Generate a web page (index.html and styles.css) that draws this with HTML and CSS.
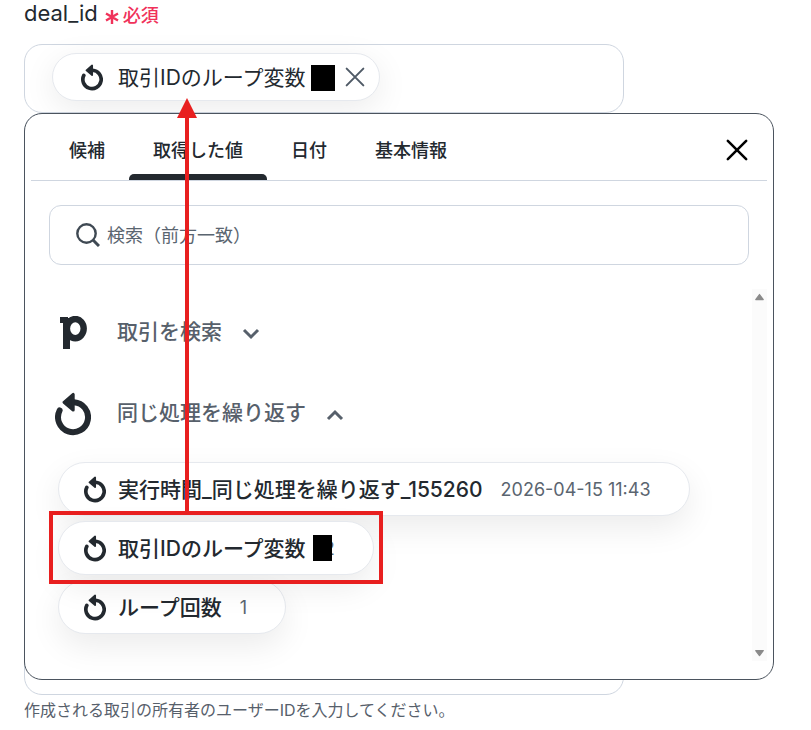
FILE: index.html
```
<!DOCTYPE html>
<html lang="ja">

<head>
  <meta charset="UTF-8">
  <meta name="viewport" content="width=device-width, initial-scale=1.0">
  <title>deal_id</title>
  <link rel="stylesheet" href="styles.css">
</head>

<body>
  <!-- shared icons -->
  <svg class="sprite" aria-hidden="true">
    <symbol id="icon-loop" viewBox="0 0 36 44">
      <path d="M4.6 18.5A15 15 0 1 0 19 10.2" fill="none" stroke="currentColor" stroke-width="6" stroke-linecap="round" />
      <path d="M9 10.3 18.2 2.4V18Z" fill="currentColor" stroke="currentColor" stroke-width="3" stroke-linejoin="round" />
    </symbol>
    <symbol id="icon-close" viewBox="0 0 24 24">
      <path d="M2 2 22 22M22 2 2 22" fill="none" stroke="currentColor" stroke-linecap="round" />
    </symbol>
    <symbol id="icon-chevron" viewBox="0 0 18 12">
      <path d="M2 2 9 9 16 2" fill="none" stroke="currentColor" stroke-width="3" />
    </symbol>
  </svg>

  <main class="field">
    <div class="field-label">
      <span>deal_id</span>
      <svg class="icon-required" viewBox="0 0 14 16" aria-hidden="true">
        <path d="M7 1V15M1 4.5 13 11.5M13 4.5 1 11.5" fill="none" stroke="currentColor" stroke-width="2.4" />
      </svg>
      <span class="required">必須</span>
    </div>

    <div class="field-box">
      <div class="chip">
        <svg class="icon-loop"><use href="#icon-loop" /></svg>
        <span class="text">取引IDのループ変数</span>
        <span class="chip-mask"></span>
        <button class="chip-remove" type="button" aria-label="削除">
          <svg><use href="#icon-close" /></svg>
        </button>
      </div>
    </div>

    <div class="picker-area">
      <div class="field-back"></div>
      <section class="picker">
        <header class="picker-header">
          <nav class="tabs">
            <button class="tab" type="button">候補</button>
            <button class="tab active" type="button">取得した値</button>
            <button class="tab" type="button">日付</button>
            <button class="tab" type="button">基本情報</button>
          </nav>
          <button class="picker-close" type="button" aria-label="閉じる">
            <svg><use href="#icon-close" /></svg>
          </button>
        </header>

        <label class="search">
          <svg viewBox="0 0 24 24" aria-hidden="true">
            <circle cx="10.5" cy="10.5" r="9.2" fill="none" stroke="currentColor" stroke-width="2.4" />
            <path d="M17 17 23 23" stroke="currentColor" stroke-width="3" />
          </svg>
          <input type="text" placeholder="検索（前方一致）" aria-label="検索（前方一致）">
        </label>

        <div class="picker-body">
          <div class="list">
            <button class="group" type="button">
              <span class="group-icon">
                <svg class="logo-p" viewBox="0 0 27 33">
                  <rect x="0" y="1" width="8" height="6" />
                  <rect x="3" y="2" width="7" height="31" />
                  <ellipse cx="15.3" cy="12.6" rx="8.4" ry="9.6" fill="none" stroke="currentColor" stroke-width="6.4" />
                </svg>
              </span>
              <span class="text">取引を検索</span>
              <svg class="chevron"><use href="#icon-chevron" /></svg>
            </button>
            <button class="group" type="button">
              <span class="group-icon">
                <svg class="logo-loop"><use href="#icon-loop" /></svg>
              </span>
              <span class="text">同じ処理を繰り返す</span>
              <svg class="chevron open"><use href="#icon-chevron" /></svg>
            </button>

            <ul class="values">
              <li>
                <button class="value" type="button">
                  <svg class="icon-loop"><use href="#icon-loop" /></svg>
                  <span class="text">実行時間_同じ処理を繰り返す_155260</span>
                  <span class="value-sample">2026-04-15 11:43</span>
                </button>
              </li>
              <li class="marked">
                <button class="value" type="button">
                  <svg class="icon-loop"><use href="#icon-loop" /></svg>
                  <span class="text">取引IDのループ変数</span>
                  <span class="value-sample masked">2</span>
                </button>
                <div class="marker">
                  <div class="marker-arrow"></div>
                </div>
              </li>
              <li>
                <button class="value" type="button">
                  <svg class="icon-loop"><use href="#icon-loop" /></svg>
                  <span class="text">ループ回数</span>
                  <span class="value-sample">1</span>
                </button>
              </li>
            </ul>
          </div>
          <div class="scrollbar" aria-hidden="true">
            <svg viewBox="0 0 10 8"><path d="M5 2 8 6H2Z" /></svg>
            <svg viewBox="0 0 10 8"><path d="M5 6 8 2H2Z" /></svg>
          </div>
        </div>
      </section>
    </div>

    <p class="help">作成される取引の所有者のユーザーIDを入力してください。</p>
  </main>
</body>

</html>
```
FILE: styles.css
```
* {
  box-sizing: border-box;
}

body {
  margin: 0;
  background: #fff;
  color: #23292f;
  font-family: Inter, "Noto Sans CJK JP", sans-serif;
}

button {
  margin: 0;
  padding: 0;
  border: none;
  background: none;
  color: inherit;
  font: inherit;
  cursor: pointer;
}

svg {
  display: block;
  flex: none;
}

.sprite {
  position: absolute;
  width: 0;
  height: 0;
}

.field {
  margin: 0 37px 0 24px;
}

/* label */
.field-label {
  display: flex;
  align-items: center;
  height: 44px;
  padding-bottom: 18px;
  font-size: 22px;
}

.icon-required {
  width: 14px;
  height: 16px;
  margin: 8px 4px 0 7px;
  color: #f0325a;
}

.required {
  padding-top: 2px;
  color: #f0325a;
  font-size: 18px;
  font-weight: 500;
}

/* input box */
.field-box,
.field-back {
  width: 80%;
  border: 1px solid #cfd6e0;
  border-radius: 18px;
}

.field-box {
  padding: 8px 27px 11px;
}

.chip {
  display: inline-flex;
  align-items: center;
  height: 48px;
  padding: 0 14px 0 28px;
  border: 1px solid #e6e9ee;
  border-radius: 24px;
  background: #fff;
  box-shadow: 0 8px 32px rgba(0, 0, 0, 0.08);
  font-size: 21px;
  vertical-align: top;
  white-space: nowrap;
}

.text {
  padding-bottom: 2px;
}

.icon-loop {
  width: 22px;
  height: 27px;
  margin-right: 15px;
}

.chip-mask {
  width: 24px;
  height: 26px;
  margin: 2px 10px 0 5px;
  background: #000;
}

.chip-remove {
  color: #4f5a66;
}

.chip-remove svg {
  width: 20px;
  height: 20px;
  stroke-width: 2.4;
}

/* picker */
.picker-area {
  display: grid;
}

.picker-area > * {
  grid-area: 1 / 1;
}

.picker {
  margin-bottom: 15px;
  padding: 0 6px 18px;
  border: 1px solid #4b545e;
  border-radius: 18px;
  background: #fff;
  z-index: 1;
}

.picker-header {
  display: flex;
  align-items: center;
  justify-content: space-between;
  height: 67px;
  padding: 0 19px 0 14px;
  border-bottom: 1px solid #cfd6e0;
}

.tabs {
  display: flex;
  height: 100%;
}

.tab {
  position: relative;
  padding: 4px 24px 0;
  font-size: 18px;
  font-weight: 500;
}

.tab.active::after {
  content: "";
  position: absolute;
  right: 0;
  bottom: 0;
  left: 0;
  height: 6px;
  border-radius: 5px 5px 0 0;
  background: #23292f;
}

.picker-close {
  padding-top: 6px;
  color: #000;
}

.picker-close svg {
  width: 22px;
  height: 22px;
  stroke-width: 2.8;
}

.search {
  display: flex;
  align-items: center;
  gap: 7px;
  height: 60px;
  margin: 24px 18px;
  padding: 0 26px;
  border: 1px solid #cfd6e0;
  border-radius: 12px;
  color: #4f5a66;
}

.search svg {
  width: 24px;
  height: 24px;
  color: #3f4953;
}

.search input {
  flex: 1;
  min-width: 0;
  padding: 0;
  border: none;
  outline: none;
  background: none;
  color: inherit;
  font: inherit;
  font-size: 18px;
}

.search input::placeholder {
  color: #5a6570;
  opacity: 1;
}

.picker-body {
  display: flex;
}

.list {
  flex: 1;
  padding: 3px 27px 27px 18px;
}

.group {
  display: flex;
  align-items: center;
  height: 81px;
  color: #57606b;
  font-size: 21px;
  font-weight: 500;
}

.group .text {
  padding-bottom: 5px;
}

.group-icon {
  display: flex;
  justify-content: center;
  width: 48px;
  margin-right: 20px;
  color: #23292f;
}

.logo-p {
  width: 27px;
  height: 33px;
  fill: currentColor;
}

.logo-loop {
  width: 36px;
  height: 44px;
}

.chevron {
  width: 18px;
  height: 12px;
  margin: 3px 0 0 20px;
}

.chevron.open {
  transform: rotate(180deg);
}

.values {
  display: flex;
  flex-direction: column;
  align-items: flex-start;
  gap: 5px;
  margin: 0;
  padding: 8px 0 0 9px;
  list-style: none;
}

.value {
  display: flex;
  align-items: center;
  height: 54px;
  padding: 0 38px 0 25px;
  border: 1px solid #e6e9ee;
  border-radius: 27px;
  background: #fff;
  box-shadow: 0 12px 32px rgba(0, 0, 0, 0.08);
  font-size: 21px;
  font-weight: 500;
  white-space: nowrap;
}

.value .icon-loop {
  margin-right: 12px;
}

.value-sample {
  position: relative;
  margin-left: 18px;
  color: #5a6570;
  font-size: 18px;
  font-weight: 400;
}

.value-sample.masked::after {
  content: "";
  position: absolute;
  top: -3px;
  right: 3px;
  width: 19px;
  height: 26px;
  background: #000;
}

/* red frame with an arrow up to the chip */
.marked {
  position: relative;
}

.marker {
  position: absolute;
  inset: -10px -9px -9px;
  z-index: 1;
  border: 4px solid #e81f1f;
  pointer-events: none;
}

.marker-arrow {
  position: absolute;
  left: 124px;
  bottom: 100%;
  width: 20px;
  height: 417px;
  background: linear-gradient(#e81f1f, #e81f1f) center bottom / 4px 400px no-repeat;
}

.marker-arrow::before {
  content: "";
  position: absolute;
  top: 0;
  left: 0;
  width: 20px;
  height: 20px;
  background: #e81f1f;
  clip-path: polygon(50% 0, 100% 100%, 0 100%);
}

/* scrollbar */
.scrollbar {
  display: flex;
  flex-direction: column;
  align-items: center;
  justify-content: space-between;
  width: 15px;
  padding: 3px 0;
  background: #fbfbfb;
}

.scrollbar svg {
  width: 13px;
  height: 10px;
  fill: #8a8a8a;
  stroke: #8a8a8a;
  stroke-linejoin: round;
}

.help {
  margin: 2px 0 0;
  color: #57606b;
  font-size: 16px;
}
```
